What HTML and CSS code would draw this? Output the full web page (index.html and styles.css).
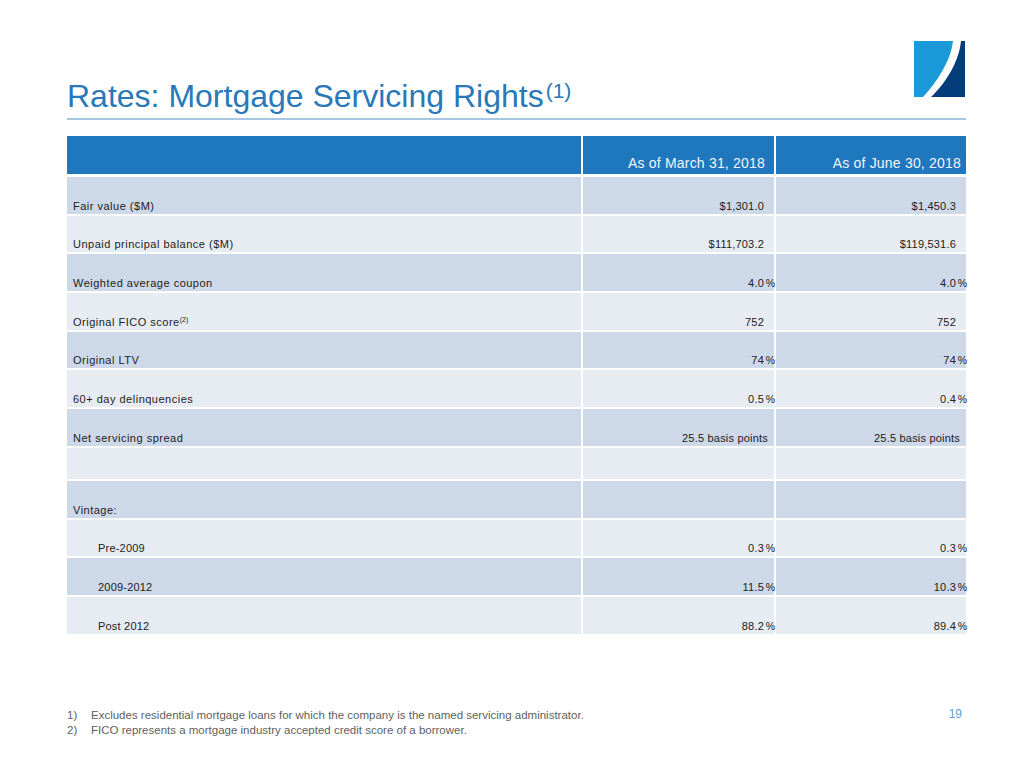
FILE: index.html
```html
<!DOCTYPE html>
<html lang="en">
<head>
<meta charset="utf-8">
<title>Rates: Mortgage Servicing Rights</title>
<link rel="stylesheet" href="styles.css">
</head>
<body>
<div class="slide">
  <header class="top">
    <h1 class="title">Rates: Mortgage Servicing Rights<sup>(1)</sup></h1>
    <svg class="logo" viewBox="0 0 51 56" width="51" height="56" aria-hidden="true">
      <path d="M0 0 H39 C37 20 22 42 9 56 H0 Z" fill="#1a9ad8"/>
      <path d="M47 0 C45 22 30 44 17 56 H51 V0 Z" fill="#053c7c"/>
    </svg>
  </header>

  <div class="tbl">
    <div class="row head">
      <div class="c lbl"></div>
      <div class="c num">As of March 31, 2018</div>
      <div class="c num">As of June 30, 2018</div>
    </div>
    <div class="row dark">
      <div class="c lbl"><span>Fair value ($M)</span></div>
      <div class="c num">$1,301.0<span class="pct"></span></div>
      <div class="c num">$1,450.3<span class="pct"></span></div>
    </div>
    <div class="row light">
      <div class="c lbl"><span>Unpaid principal balance ($M)</span></div>
      <div class="c num">$111,703.2<span class="pct"></span></div>
      <div class="c num">$119,531.6<span class="pct"></span></div>
    </div>
    <div class="row dark">
      <div class="c lbl"><span>Weighted average coupon</span></div>
      <div class="c num">4.0<span class="pct">%</span></div>
      <div class="c num">4.0<span class="pct">%</span></div>
    </div>
    <div class="row light">
      <div class="c lbl"><span>Original FICO score<sup class="fn">(2)</sup></span></div>
      <div class="c num">752<span class="pct"></span></div>
      <div class="c num">752<span class="pct"></span></div>
    </div>
    <div class="row dark">
      <div class="c lbl"><span>Original LTV</span></div>
      <div class="c num">74<span class="pct">%</span></div>
      <div class="c num">74<span class="pct">%</span></div>
    </div>
    <div class="row light">
      <div class="c lbl"><span>60+ day delinquencies</span></div>
      <div class="c num">0.5<span class="pct">%</span></div>
      <div class="c num">0.4<span class="pct">%</span></div>
    </div>
    <div class="row dark">
      <div class="c lbl"><span>Net servicing spread</span></div>
      <div class="c num bp">25.5 basis points</div>
      <div class="c num bp">25.5 basis points</div>
    </div>
    <div class="row light empty">
      <div class="c lbl"></div>
      <div class="c num"></div>
      <div class="c num"></div>
    </div>
    <div class="row dark">
      <div class="c lbl"><span>Vintage:</span></div>
      <div class="c num"></div>
      <div class="c num"></div>
    </div>
    <div class="row light">
      <div class="c lbl sub"><span>Pre-2009</span></div>
      <div class="c num">0.3<span class="pct">%</span></div>
      <div class="c num">0.3<span class="pct">%</span></div>
    </div>
    <div class="row dark">
      <div class="c lbl sub"><span>2009-2012</span></div>
      <div class="c num">11.5<span class="pct">%</span></div>
      <div class="c num">10.3<span class="pct">%</span></div>
    </div>
    <div class="row light">
      <div class="c lbl sub"><span>Post 2012</span></div>
      <div class="c num">88.2<span class="pct">%</span></div>
      <div class="c num">89.4<span class="pct">%</span></div>
    </div>
  </div>

  <footer class="foot">
    <ol class="notes">
      <li><span class="n">1)</span>Excludes residential mortgage loans for which the company is the named servicing administrator.</li>
      <li><span class="n">2)</span>FICO represents a mortgage industry accepted credit score of a borrower.</li>
    </ol>
    <div class="page">19</div>
  </footer>
</div>
</body>
</html>
```

FILE: styles.css
```css
* { box-sizing: border-box; }

html, body {
  margin: 0;
  padding: 0;
  background: #ffffff;
}

body {
  font-family: "Liberation Sans", Arial, Helvetica, sans-serif;
  color: #000;
}

.slide {
  width: 1024px;
  height: 768px;
  padding: 41px 58px 0 67px;
  overflow: hidden;
}

/* ---------- header ---------- */
.top {
  display: flex;
  justify-content: space-between;
  align-items: flex-end;
  border-bottom: 2px solid #a8c7e3;
  padding-bottom: 3px;
}

.title {
  margin: 0;
  font-weight: normal;
  font-size: 32px;
  line-height: 37px;
  color: #2878ba;
  white-space: nowrap;
}

.title sup {
  font-size: 21px;
  line-height: 0;
  vertical-align: 9px;
  margin-left: 2px;
}

.logo {
  display: block;
  margin-bottom: 18px;
  margin-right: 1px;
}

/* ---------- table ---------- */
.tbl {
  margin-top: 16px;
  width: 899px;
  display: flex;
  flex-direction: column;
  gap: 2px;
}

.row {
  display: grid;
  grid-template-columns: 514px 191px 190px;
  column-gap: 2px;
  height: 36.7px;
}

.row.head {
  height: 38px;
  margin-bottom: 1px;
}

.row.empty {
  height: 31px;
}

.c {
  display: flex;
  align-items: flex-end;
  padding-bottom: 1px;
  font-size: 11px;
  line-height: 14px;
  white-space: nowrap;
}

.row.dark .c { background: #cdd8e8; }
.row.light .c { background: #e7ecf3; }

.row.head .c {
  background: #1f77bd;
  color: #f2f5f9;
  font-size: 14px;
  line-height: 17px;
  letter-spacing: 0.2px;
  padding-bottom: 2px;
  padding-right: 9px;
}

.row.head .c:last-child { padding-right: 5px; }

.lbl {
  padding-left: 6px;
  letter-spacing: 0.5px;
  color: #222;
}

.lbl.sub { padding-left: 31px; letter-spacing: 0.2px; }

.lbl .fn {
  font-size: 7px;
  line-height: 0;
  vertical-align: 4px;
  letter-spacing: 0;
}

.num {
  justify-content: flex-end;
  padding-right: 10px;
  letter-spacing: 0.2px;
  color: #222;
}

.num.bp { padding-right: 6px; }

.pct {
  display: inline-block;
  width: 11px;
  margin-right: -11px;
  text-align: right;
  font-size: 10.5px;
  letter-spacing: 0;
}

/* ---------- footer ---------- */
.foot {
  margin-top: 74px;
  width: 899px;
  display: flex;
  justify-content: space-between;
  align-items: flex-start;
}

.notes {
  list-style: none;
  margin: 0;
  padding: 0;
  font-size: 11.5px;
  line-height: 15px;
  color: #5f5f5f;
}

.notes li {
  display: flex;
}

.notes .n {
  width: 24px;
  flex: none;
}

.page {
  font-size: 12px;
  line-height: 13px;
  color: #5b9fd6;
  padding-right: 4px;
}
```
